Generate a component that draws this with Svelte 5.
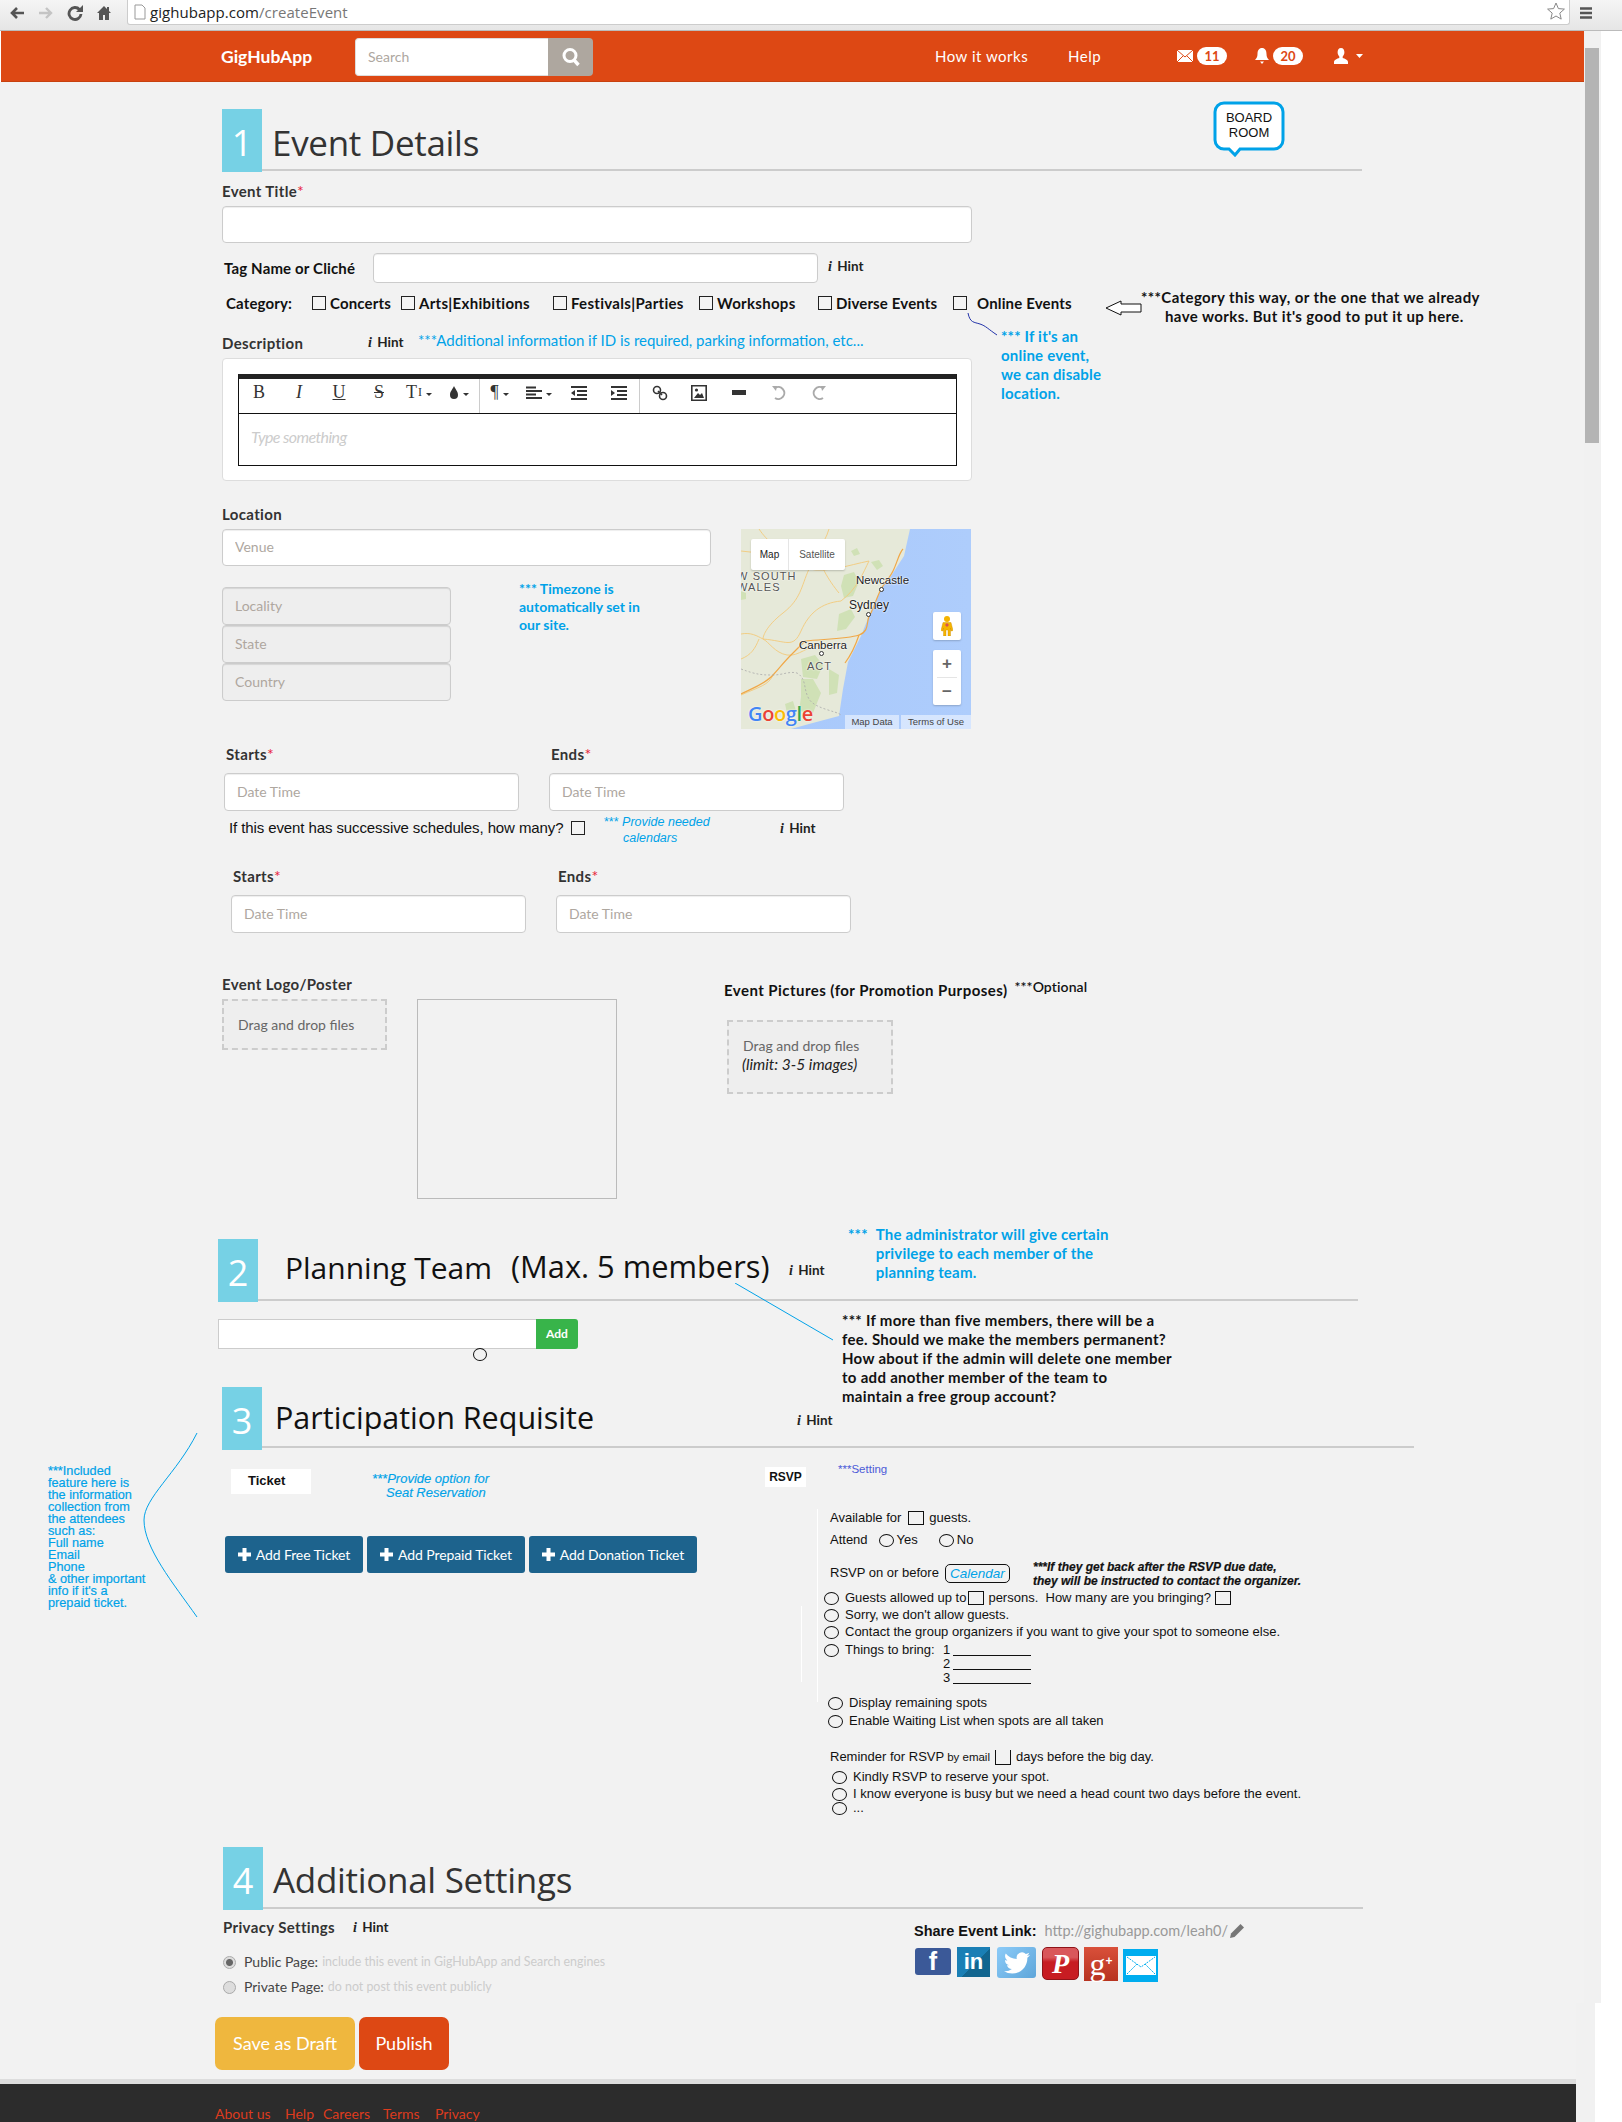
<script>
</script>

{#snippet hint()}
  <span class="hint"><i>i</i> Hint</span>
{/snippet}

<div class="root">
  <header class="browser">
    <svg class="bicon" width="16" height="16" viewBox="0 0 16 16"><path d="M15 8H4M8 3 3 8l5 5" fill="none" stroke="#555" stroke-width="2.6"/></svg>
    <svg class="bicon" width="16" height="16" viewBox="0 0 16 16"><path d="M1 8h11M8 3l5 5-5 5" fill="none" stroke="#c4c4c4" stroke-width="2.400"/></svg>
    <svg class="bicon" width="16" height="16" viewBox="0 0 16 16"><path d="M12.500 4.500A6 6 0 1 0 14 9" fill="none" stroke="#555" stroke-width="2.800"/><path d="M9 7h7V0z" fill="#555"/></svg>
    <svg class="bicon" width="16" height="16" viewBox="0 0 16 16"><path d="M8 1 1 8h2v7h4v-5h2v5h4V8h2l-2-2V2h-2v2z" fill="#555"/></svg>
    <div class="url">
      <svg width="12" height="16" viewBox="0 0 12 16"><path d="M1 1h7l3 3v11H1z" fill="#fff" stroke="#999"/></svg>
      <span class="u1">gighubapp.com</span><span class="u2">/createEvent</span>
      <svg class="star" width="18" height="18" viewBox="0 0 18 18"><path d="m9 1 2.400 5.600 6 .5-4.600 4 1.400 6L9 14l-5.200 3.100 1.400-6-4.600-4 6-.5z" fill="#fff" stroke="#888"/></svg>
    </div>
    <svg class="burger" width="14" height="14" viewBox="0 0 14 14"><path d="M1 2.500h12M1 7h12M1 11.500h12" stroke="#555" stroke-width="2.400"/></svg>
  </header>

  <nav class="nav">
    <span></span>
    <span class="logo">GigHubApp</span>
    <div class="search">
      <input placeholder="Search" />
      <button aria-label="search"><svg width="20" height="20" viewBox="0 0 20 20"><circle cx="9" cy="8.500" r="6" fill="none" stroke="#fff" stroke-width="3"/><path d="m13 13 4.500 5" stroke="#fff" stroke-width="3.400"/></svg></button>
    </div>
    <span></span>
    <span class="nlink">How it works</span>
    <span class="nlink">Help</span>
    <span class="ni">
      <svg width="16" height="12" viewBox="0 0 16 12"><path d="M0 0h16v12H0z" fill="#fff"/><path d="m0 0 8 7 8-7M0 12l6-6M16 12l-6-6" stroke="#dd4814" fill="none"/></svg>
      <b class="badge">11</b>
    </span>
    <span class="ni">
      <svg width="14" height="16" viewBox="0 0 14 16"><path d="M7 0c3 0 4.500 2.500 4.500 6 0 3 1 4.500 2.500 6H0c1.500-1.500 2.500-3 2.500-6C2.500 2.500 4 0 7 0zM5 13.500h4L7 16z" fill="#fff"/></svg>
      <b class="badge">20</b>
    </span>
    <span class="ni user">
      <svg width="16" height="16" viewBox="0 0 16 16"><path d="M8 0c2.400 0 3.400 2 3.400 4.300 0 2-1 3.400-1.700 4.300v1.400c2 .8 5.300 1.600 5.300 4V16H1v-2c0-2.400 3.300-3.200 5.300-4V8.600C5.600 7.700 4.600 6.300 4.600 4.300 4.600 2 5.600 0 8 0z" fill="#fff"/></svg>
      <svg width="7" height="4" viewBox="0 0 7 4"><path d="M0 0h7L3.500 4z" fill="#fff"/></svg>
    </span>
  </nav>

  <main class="page">
    <section class="s1">
      <div class="head">
        <div class="num">1</div>
        <h2 class="title t1">Event Details</h2>
      </div>

      <div class="bubble">
        <svg width="72" height="56" viewBox="0 0 72 56"><path d="M11 2h50a9 9 0 0 1 9 9v28a9 9 0 0 1-9 9H27l-5 6-6-6h-5a9 9 0 0 1-9-9V11a9 9 0 0 1 9-9z" fill="#fff" stroke="#00a2e8" stroke-width="3"/></svg>
        <span>BOARD<br />ROOM</span>
      </div>
      <svg class="arrow" width="37" height="16" viewBox="0 0 37 16"><path d="M36 4H16V1L1 8l15 7v-3h20z" fill="#fff" stroke="#111"/></svg>
      <div class="catnote"><div>***Category this way, or the one that we already</div><div class="ind">have works. But it's good to put it up here.</div></div>
      <svg class="ccurve" width="32" height="24" viewBox="0 0 32 24"><path d="M1 1c2 10 6 9 12 11s8 5 17 11" fill="none" stroke="#2233aa"/></svg>
      <div class="onote">*** If it's an<br />online event,<br />we can disable<br />location.</div>

      <label class="lb l-title">Event Title<em>*</em></label>
      <input class="inp title-in" />

      <div class="tagrow">
        <span class="cb tagl">Tag Name or Cliché</span>
        <input class="inp tag-in" />
        {@render hint()}
      </div>

      <div class="cats">
        <span class="cb">Category:</span>
        <span class="cat"><s class="box"></s><span class="cb">Concerts</span></span>
        <span class="cat"><s class="box"></s><span class="cb wide">Arts|Exhibitions</span></span>
        <span class="cat"><s class="box"></s><span class="cb wide">Festivals|Parties</span></span>
        <span class="cat"><s class="box"></s><span class="cb wide">Workshops</span></span>
        <span class="cat"><s class="box"></s><span class="cb">Diverse Events</span></span>
        <span class="cat online"><s class="box"></s><span class="cb">Online Events</span></span>
      </div>

      <div class="descrow">
        <label class="lb">Description</label>
        {@render hint()}
        <span class="addl">***Additional information if ID is required, parking information, etc...</span>
      </div>

      <div class="panel">
        <div class="editor">
          <div class="tools">
            <span class="tool tb">B</span>
            <span class="tool ti">I</span>
            <span class="tool tu">U</span>
            <span class="tool ts">S</span>
            <span class="tool tt">T<small>I</small><u></u></span>
            <span class="tool"><svg width="10" height="14" viewBox="0 0 10 14"><path d="M5 0c1 3 4 5 4 9a4 4 0 0 1-8 0c0-4 3-6 4-9z" fill="#333"/></svg><u></u></span>
            <span class="tool sep tp">¶<u></u></span>
            <span class="tool"><svg width="16" height="14" viewBox="0 0 16 14"><path d="M0 1.500h10M0 5h16M0 8.500h10M0 12h16" stroke="#333" stroke-width="2"/></svg><u></u></span>
            <span class="tool"><svg width="16" height="14" viewBox="0 0 16 14"><path d="M0 1h16M6 5h10M6 9h10M0 13h16" stroke="#333" stroke-width="2"/><path d="M4 4v6L0 7z" fill="#333"/></svg></span>
            <span class="tool"><svg width="16" height="14" viewBox="0 0 16 14"><path d="M0 1h16M6 5h10M6 9h10M0 13h16" stroke="#333" stroke-width="2"/><path d="M0 4v6l4-3z" fill="#333"/></svg></span>
            <span class="tool sep"><svg width="16" height="16" viewBox="0 0 16 16"><circle cx="5" cy="5" r="3.500" fill="none" stroke="#333" stroke-width="1.600"/><circle cx="11" cy="11" r="3.500" fill="none" stroke="#333" stroke-width="1.600"/><path d="m6 6 4 4" stroke="#333" stroke-width="1.600"/></svg></span>
            <span class="tool"><svg width="16" height="16" viewBox="0 0 16 16"><path d="M.8.800h14.400v14.400H.8z" fill="#fff" stroke="#333" stroke-width="1.600"/><path d="M3 13l4-5 2 2 2-2 2 5z" fill="#333"/><circle cx="5.500" cy="5" r="1.600" fill="#333"/></svg></span>
            <span class="tool"><svg width="14" height="6" viewBox="0 0 14 6"><path d="M0 0h14v5H0z" fill="#333"/></svg></span>
            <span class="tool"><svg width="14" height="16" viewBox="0 0 14 16"><path d="M3 3a6 6 0 1 1 0 10" fill="none" stroke="#aaa" stroke-width="2"/><path d="M0 1l5 0-1 5z" fill="#aaa"/></svg></span>
            <span class="tool"><svg width="14" height="16" viewBox="0 0 14 16"><path d="M11 3a6 6 0 1 0 0 10" fill="none" stroke="#aaa" stroke-width="2"/><path d="M14 1l-5 0 1 5z" fill="#aaa"/></svg></span>
          </div>
          <div class="edbody">Type something</div>
        </div>
      </div>

      <label class="lb l-loc">Location</label>
      <div class="locgrid">
        <div>
          <input class="inp" placeholder="Venue" />
          <div class="locsub">
            <div class="stack">
              <input class="inp dis" placeholder="Locality" />
              <input class="inp dis" placeholder="State" />
              <input class="inp dis" placeholder="Country" />
            </div>
            <div class="tznote">*** Timezone is<br />automatically set in<br />our site.</div>
          </div>
        </div>
        <div class="map">
          <svg width="230" height="200" viewBox="0 0 230 200">
            <defs><linearGradient id="sea" x1="0" x2="1" y1="0" y2="0"><stop offset="0" stop-color="#8fb6f8"/><stop offset=".25" stop-color="#a9c9fb"/><stop offset="1" stop-color="#aecdfc"/></linearGradient></defs>
            <rect width="230" height="200" fill="url(#sea)"/>
            <path d="M0 0h169l-6 27-13 20-10 13-12 27-8 20-13 26-5 27-4 27-30 8-18 5H0z" fill="#e6e9d9"/>
            <g fill="#d0e1b6">
              <path d="M103 46l10-3 5 10-6 14-9 2-3-12z"/>
              <path d="M98 85l12-5 4 8-9 12-9 2z"/>
              <path d="M60 130l14-4 8 10-6 14-14-2z"/>
              <path d="M60 150l12 0 8 14-8 20-14-2 2-14z"/>
              <path d="M88 140l10 6-2 18-8 2z"/>
              <path d="M130 33l8-2 4 6-6 4z"/>
              <path d="M0 62l5 2 0 6-5 1z"/>
              <path d="M110 22l6-3 3 6-6 2z"/>
              <path d="M44 175l8-3 3 10-9 2z"/>
            </g>
            <g fill="none" stroke="#f3c97a" stroke-width=".9">
              <path d="M0 22c30 2 50 14 68 18s40-4 60-8"/>
              <path d="M18 0c8 12 20 22 50 40"/>
              <path d="M68 40c-8 18-8 30-26 44S22 108 22 110"/>
              <path d="M100 72c-20 2-32 12-40 30s-14 10-38 8"/>
              <path d="M0 105c10-2 16 2 22 5s12 14 24 16 20-10 36-10"/>
              <path d="M0 130c10-4 14-10 18-20"/>
              <path d="M88 0c-2 8-8 16-10 24s10 28 20 40"/>
              <path d="M128 32c-6 12-12 28-28 40"/>
              <path d="M32 146c-4 10-14 12-32 20"/>
            </g>
            <g fill="none" stroke="#f0a848" stroke-width="1.200">
              <path d="M0 165c12-6 24-10 32-19s12-14 18-20 10-10 14-14"/>
              <path d="M64 112c20-2 42-2 54-6s6-16 12-22"/>
              <path d="M130 84c4-10 8-20 10-24s8-10 12-18 6-18 10-22"/>
              <path d="M118 106c-4 12-8 20-14 28"/>
            </g>
            <path d="M0 140c16 6 22 6 32 6s16-4 24-2c10 6 6 16 12 26s28 12 32 16" fill="none" stroke="#aaa" stroke-dasharray="2 2" stroke-width=".8"/>
          </svg>
          <span class="ml ml1">W SOUTH</span>
          <span class="ml ml2">WALES</span>
          <span class="ml ml3">Newcastle</span>
          <span class="ml ml4">Sydney</span>
          <span class="ml ml5">Canberra</span>
          <span class="ml ml6">ACT</span>
          <i class="dot d1"></i><i class="dot d2"></i><i class="dot d3"></i>
          <div class="mapsw"><span class="on">Map</span><span>Satellite</span></div>
          <div class="peg"><svg width="12" height="20" viewBox="0 0 12 20"><circle cx="6" cy="3" r="3" fill="#f5b400"/><path d="M2 6.500h8l2 8-2 .5-.5-3V20H7v-6H5v6H2.500v-8L2 15l-2-.5z" fill="#f5b400" stroke="#c98a00" stroke-width=".4"/><path d="M6 7l2 2-2 2-2-2z" fill="#d9534f"/></svg></div>
          <div class="zoomc"><span>+</span><hr /><span>−</span></div>
          <div class="goog"><span class="g1">G</span><span class="g2">o</span><span class="g3">o</span><span class="g1">g</span><span class="g4">l</span><span class="g2">e</span></div>
          <div class="attr"><span>Map Data</span><span>Terms of Use</span></div>
        </div>
      </div>

      <div class="dates d-a">
        <div><label class="lb">Starts<em>*</em></label><input class="inp" placeholder="Date Time" /></div>
        <div><label class="lb">Ends<em>*</em></label><input class="inp" placeholder="Date Time" /></div>
      </div>

      <div class="succ">
        <span class="qtxt">If this event has successive schedules, how many?</span>
        <s class="box"></s>
        <span class="pnote"><span>*** <i>Provide needed</i></span><i class="cal">calendars</i></span>
        {@render hint()}
      </div>

      <div class="dates d-b">
        <div><label class="lb">Starts<em>*</em></label><input class="inp" placeholder="Date Time" /></div>
        <div><label class="lb">Ends<em>*</em></label><input class="inp" placeholder="Date Time" /></div>
      </div>

      <div class="media">
        <div class="mcol1">
          <label class="lb">Event Logo/Poster</label>
          <div class="drop d1z">Drag and drop files</div>
        </div>
        <div class="poster"></div>
        <div class="mcol3">
          <div class="pichead"><span class="cb pict">Event Pictures (for Promotion Purposes)</span><span class="opt">***Optional</span></div>
          <div class="drop d2z">Drag and drop files<br /><i>(limit: 3-5 images)</i></div>
        </div>
      </div>
    </section>

    <section class="s2">
      <div class="head">
        <div class="num">2</div>
        <h2 class="title t2"><span class="pt">Planning Team</span><span class="mx">(Max. 5 members)</span>{@render hint()}</h2>
      </div>
      <div class="adminnote"><span>***</span><div>The administrator will give certain<br />privilege to each member of the<br />planning team.</div></div>
      <svg class="pline" width="100" height="60" viewBox="0 0 100 60"><path d="M0 0 98 57" stroke="#00a2e8" fill="none"/></svg>
      <div class="feenote">*** If more than five members, there will be a<br />fee. Should we make the members permanent?<br />How about if the admin will delete one member<br />to add another member of the team to<br />maintain a free group account?</div>
      <div class="addrow"><input class="inp" /><button>Add</button></div>
      <i class="blob"></i>
    </section>

    <section class="s3">
      <div class="head">
        <div class="num">3</div>
        <h2 class="title t3"><span class="prq">Participation Requisite</span>{@render hint()}</h2>
      </div>
      <div class="incl">***Included<br />feature here is<br />the information<br />collection from<br />the attendees<br />such as:<br />Full name<br />Email<br />Phone<br />&amp; other important<br />info if it's a<br />prepaid ticket.</div>
      <svg class="icurve" width="56" height="186" viewBox="0 0 56 186"><path d="M54 0C34 40 1 65 1 87c0 28 29 63 53 97" fill="none" stroke="#00a2e8"/></svg>

      <div class="pgrid">
        <div class="pleft">
          <div class="tickrow">
            <span class="tick">Ticket</span>
            <span class="seat">***Provide option for<br /><span class="ind2">Seat Reservation</span></span>
          </div>
          <div class="tbtns">
            <button class="tb1"><svg width="13" height="13" viewBox="0 0 13 13"><path d="M4.500 0h4v4.500H13v4H8.500V13h-4V8.500H0v-4h4.500z" fill="#fff"/></svg>Add Free Ticket</button>
            <button class="tb2"><svg width="13" height="13" viewBox="0 0 13 13"><path d="M4.500 0h4v4.500H13v4H8.500V13h-4V8.500H0v-4h4.500z" fill="#fff"/></svg>Add Prepaid Ticket</button>
            <button class="tb3"><svg width="13" height="13" viewBox="0 0 13 13"><path d="M4.500 0h4v4.500H13v4H8.500V13h-4V8.500H0v-4h4.500z" fill="#fff"/></svg>Add Donation Ticket</button>
          </div>
        </div>
        <div class="pright">
          <i class="wl wl1"></i><i class="wl wl2"></i>
          <div class="rsvphead"><span class="rsvp">RSVP</span><span class="setting"><b>***</b>Setting</span></div>
          <div class="form">
            <div class="rl a1">Available for <s class="bx"></s> guests.</div>
            <div class="rl a2 m8">Attend <s class="rd r1"></s>Yes <s class="rd r2"></s>No</div>
            <div class="rl a3 m19">RSVP on or before <span class="calb">Calendar</span><span class="due">***If they get back after the RSVP due date,<br />they will be instructed to contact the organizer.</span></div>

            <div class="rl o m11"><s class="rd"></s>Guests allowed up to<s class="bx b1"></s>persons.&nbsp; How many are you bringing?<s class="bx b2"></s></div>
            <div class="rl o m3"><s class="rd"></s>Sorry, we don't allow guests.</div>
            <div class="rl o m3"><s class="rd"></s>Contact the group organizers if you want to give your spot to someone else.</div>
            <div class="rl o m4"><s class="rd"></s><span class="thw">Things to bring:</span><span class="n">1</span><s class="ul"></s></div>
            <div class="rl o"><span class="nb"><span class="n">2</span><s class="ul"></s></span></div>
            <div class="rl o"><span class="nb"><span class="n">3</span><s class="ul"></s></span></div>

            <div class="rl o2 m11"><s class="rd"></s>Display remaining spots</div>
            <div class="rl o2 m4"><s class="rd"></s>Enable Waiting List when spots are all taken</div>

            <div class="rl rem m22">Reminder for RSVP <small>by email</small> <s class="cup"></s> days before the big day.</div>
            <div class="rl o3 m6"><s class="rd"></s>Kindly RSVP to reserve your spot.</div>
            <div class="rl o3 m3"><s class="rd"></s>I know everyone is busy but we need a head count two days before the event.</div>
            <div class="rl o3"><s class="rd"></s>...</div>
          </div>
        </div>
      </div>
    </section>

    <section class="s4">
      <div class="head">
        <div class="num">4</div>
        <h2 class="title t4">Additional Settings</h2>
      </div>
      <div class="s4grid">
        <div class="priv">
          <div class="privhead"><label class="lb">Privacy Settings</label>{@render hint()}</div>
          <div class="prow p1"><s class="pr on"></s>Public Page: <span>include this event in GigHubApp and Search engines</span></div>
          <div class="prow p2"><s class="pr"></s>Private Page: <span>do not post this event publicly</span></div>
        </div>
        <div class="share">
          <div class="shead"><span class="sl">Share Event Link:</span><span class="surl">http://gighubapp.com/leah0/</span>
            <svg width="14" height="14" viewBox="0 0 14 14"><path d="M10.500 0 14 3.500 4.500 13 0 14l1-4.500z" fill="#777"/></svg>
          </div>
          <div class="socs">
            <span class="soc fb">f</span>
            <span class="soc li">in</span>
            <span class="soc tw"><svg width="30" height="26" viewBox="0 0 24 24"><path d="M23.953 4.570a10 10 0 01-2.825.775 4.958 4.958 0 002.163-2.723c-.951.555-2.005.959-3.127 1.184a4.920 4.920 0 00-8.384 4.482C7.690 8.095 4.067 6.130 1.640 3.162a4.822 4.822 0 00-.666 2.475c0 1.710.870 3.213 2.188 4.096a4.904 4.904 0 01-2.228-.616v.060a4.923 4.923 0 003.946 4.827 4.996 4.996 0 01-2.212.085 4.936 4.936 0 004.604 3.417 9.867 9.867 0 01-6.102 2.105c-.390 0-.779-.023-1.170-.067a13.995 13.995 0 007.557 2.209c9.053 0 13.998-7.496 13.998-13.985 0-.210 0-.420-.015-.630A9.935 9.935 0 0024 4.590z" fill="#fff"/></svg></span>
            <span class="soc pi">P</span>
            <span class="soc gp">g<small>+</small></span>
            <span class="soc ma"><svg width="30" height="19" viewBox="0 0 30 19"><path d="M0 0h30v19H0z" fill="#fff"/><path d="m1 1 14 10L29 1M1 18l10-10M29 18 19 8" stroke="#00adef" fill="none" stroke-dasharray="2 1"/></svg></span>
          </div>
        </div>
      </div>
      <div class="actions"><button class="draft">Save as Draft</button><button class="pub">Publish</button></div>
    </section>
  </main>

  <footer class="foot">
    <a href="#a">About us</a><a href="#h">Help</a><a href="#c">Careers</a><a href="#t">Terms</a><a href="#p">Privacy</a>
  </footer>

  <div class="scroll"><i class="sup"></i><i class="thumb"></i></div>
  <div class="edge"></div>
</div>

<style>
  :global(body) { margin: 0; background: #fff; }
  .root { position: relative; width: 1622px; height: 2122px; overflow: hidden; background: #fff; font-family: Lato, "Open Sans", sans-serif; color: #333; font-size: 14px; }
  input, button { font-family: inherit; box-sizing: border-box; }
  input::placeholder { color: #aea79f; opacity: 1; }
  s { text-decoration: none; display: inline-block; }
  em { color: #e8243c; font-style: normal; font-weight: 400; }

  .browser { height: 31px; background: linear-gradient(#f5f5f5, #e6e6e6); border-bottom: 1px solid #bbb; box-sizing: border-box; display: flex; align-items: center; padding: 0 0 5px 9px; gap: 13px; }
  .bicon { flex: none; }
  .url { flex: none; width: 1443px; height: 26px; margin-left: 2px; margin-top: -1px; background: #fff; border: 1px solid #ccc; border-top: 0; border-radius: 0 0 3px 3px; box-sizing: border-box; display: flex; align-items: center; padding-left: 6px; font: 15px "Open Sans", sans-serif; position: relative; letter-spacing: .05px; }
  .url svg:first-child { margin-right: 4px; }
  .u1 { color: #222; } .u2 { color: #777; }
  .star { position: absolute; right: 4px; top: 3px; }
  .burger { margin-left: -4px; }

  .nav { height: 51px; width: 1583px; margin-left: 1px; background: #dd4814; display: grid; grid-template-columns: 220px 134px 238px 342px 133px 109px 78px 78px 60px; align-items: center; color: #fff; box-sizing: border-box; border-bottom: 1px solid #c8410f; }
  .logo { font-size: 17.500px; font-weight: 700; color: #fff; }
  .search { display: flex; height: 38px; margin-top: 1px; }
  .search input { width: 193px; height: 38px; border: 1px solid #ddd; border-right: 0; border-radius: 4px 0 0 4px; padding: 0 12px; font-size: 14px; background: #fff; }
  .search button { width: 45px; height: 38px; border: 0; background: #aea79f; border-radius: 0 4px 4px 0; padding: 0; display: flex; align-items: center; justify-content: center; }
  .nlink { font-size: 15px; letter-spacing: .5px; }
  .ni { display: flex; align-items: center; gap: 4px; }
  .badge { background: #fff; color: #dd4814; font-size: 13px; width: 30px; height: 18px; line-height: 18px; text-align: center; border-radius: 9px; font-weight: 700; }
  .user { gap: 7px; }

  .page { width: 1584px; height: 1997px; background: #f2f2f2; padding-top: 27px; box-sizing: border-box; }

  .head { display: flex; height: 63px; align-items: flex-start; }
  .num { flex: none; width: 40px; height: 63px; background: #76d1e5; color: #fff; font: 36px/67px "Open Sans", sans-serif; text-align: center; }
  .title { margin: 0; height: 61px; border-bottom: 2px solid #ccc; box-sizing: content-box; flex: 1; font-weight: 400; font-family: "Open Sans", sans-serif; color: #333; display: flex; align-items: flex-end; }
  .t1, .t4 { font-size: 35px; padding-left: 10px; height: 60px; letter-spacing: -.3px; }
  .t1 { line-height: 53px; }
  .t4 { line-height: 54px; }
  .lb { display: block; font: 700 15px/20px Lato, sans-serif; color: #333; letter-spacing: .35px; }
  .lb em { font-size: 16px; }
  .cb { font: 700 15px/20px Lato, sans-serif; color: #111; white-space: nowrap; letter-spacing: .15px; }
  .wide { letter-spacing: .3px; }
  .pict { letter-spacing: .45px; }
  .inp { display: block; width: 100%; height: 38px; background: #fff; border: 1px solid #ccc; border-radius: 4px; padding: 0 12px 2px; font-size: 14px; box-shadow: inset 0 1px 1px rgba(0,0,0,.07); }
  .hint { font: 700 13.500px/16px Lato, sans-serif; color: #222; white-space: nowrap; }
  .hint i { font-family: "Liberation Serif", serif; font-size: 14px; margin-right: 2px; }
  .box { width: 12px; height: 12px; border: 1px solid #222; background: #f4f4f4; flex: none; }

  .s1 { position: relative; margin-left: 222px; width: 1140px; }
  .bubble { position: absolute; left: 991px; top: -8px; width: 72px; height: 56px; }
  .bubble svg { position: absolute; inset: 0; }
  .bubble span { position: absolute; left: 0; right: 0; top: 9px; text-align: center; font: 13px/15px "Liberation Sans", sans-serif; color: #111; }
  .arrow { position: absolute; left: 883px; top: 191px; }
  .catnote { position: absolute; left: 919px; top: 179px; font: 700 15px/19px Lato, sans-serif; color: #111; white-space: nowrap; letter-spacing: .4px; }
  .ind { padding-left: 24px; }
  .ccurve { position: absolute; left: 745px; top: 203px; }
  .onote { position: absolute; left: 779px; top: 218px; font: 700 15px/19px Lato, sans-serif; color: #00a2e8; white-space: nowrap; letter-spacing: .2px; }

  .l-title { margin-top: 9px; }
  .title-in { width: 750px; height: 37px; margin-top: 5px; }
  .tagrow { display: grid; grid-template-columns: 151px 455px auto; margin-top: 10px; align-items: center; }
  .tagl { padding-left: 2px; }
  .tag-in { width: 445px; height: 30px; }
  .tagrow .hint { margin-top: -4px; }
  .cats { display: grid; grid-template-columns: 86px 89px 152px 146px 119px 135px 144px; grid-template-rows: 14px; padding-left: 4px; margin-top: 13px; height: 14px; align-items: center; }
  .cat { display: flex; align-items: center; gap: 4px; }
  .online { gap: 10px; }
  .descrow { display: grid; grid-template-columns: 146px 50px auto; margin-top: 23px; height: 20px; align-items: start; }
  .descrow .hint { margin-top: 1px; }
  .addl { font: 15px/15px Lato, sans-serif; color: #00a2e8; white-space: nowrap; }
  .panel { width: 750px; height: 123px; margin-top: 5px; box-sizing: border-box; background: #fff; border: 1px solid #ddd; border-radius: 4px; padding: 15px 14px 0 15px; }
  .editor { border: 1px solid #111; border-top: 5px solid #222; height: 92px; box-sizing: border-box; }
  .tools { display: flex; height: 35px; border-bottom: 1px solid #111; padding-top: 0; box-sizing: border-box; }
  .tool { width: 40px; flex: none; display: flex; align-items: center; justify-content: center; gap: 4px; box-sizing: border-box; color: #333; font: 18px "Liberation Serif", serif; position: relative; padding-bottom: 7px; }
  .tool.sep { border-left: 1px solid #ccc; padding-left: 0; }
  .tool u { width: 0; height: 0; border: 3px solid transparent; border-top: 3px solid #333; border-bottom: 0; text-decoration: none; margin-top: 3px; }
  .ti { font-style: italic; }
  .tu { text-decoration: underline; }
  .ts { text-decoration: line-through; }
  .tt small { font-size: 12px; margin-left: -3px; }
  .edbody { padding: 13px 10px 0 12px; font: italic 16px/20px Lato, sans-serif; color: #ccc; letter-spacing: -.6px; }

  .l-loc { margin-top: 23px; }
  .locgrid { display: grid; grid-template-columns: 489px 230px; column-gap: 30px; margin-top: 5px; }
  .locgrid .inp { height: 37px; }
  .locsub { display: flex; margin-top: 21px; }
  .stack { width: 229px; }
  .stack .inp { height: 38px; }
  .dis { background: #eee; border-color: #ccc; box-shadow: inset 0 1px 1px rgba(0,0,0,.1); }
  .tznote { margin: -7px 0 0 68px; font: 700 14px/18px Lato, sans-serif; color: #00a2e8; white-space: nowrap; }
  .map { position: relative; width: 230px; height: 200px; overflow: hidden; }
  .map > svg { display: block; }
  .ml { position: absolute; font: 11px/12px "Liberation Sans", sans-serif; color: #222; white-space: nowrap; text-shadow: 0 0 2px #fff, 0 0 2px #fff; }
  .ml1 { left: -4px; top: 41px; letter-spacing: 1.100px; color: #555; }
  .ml2 { left: -4px; top: 52px; letter-spacing: 1.100px; color: #555; }
  .ml3 { left: 115px; top: 45px; font-size: 11.500px; }
  .ml4 { left: 108px; top: 70px; font-size: 12px; }
  .ml5 { left: 58px; top: 110px; font-size: 11.500px; }
  .ml6 { left: 66px; top: 131px; letter-spacing: 1px; color: #555; }
  .dot { position: absolute; width: 3px; height: 3px; border: 1px solid #333; border-radius: 50%; background: #fff; }
  .d1 { left: 138px; top: 58px; } .d2 { left: 125px; top: 83px; } .d3 { left: 78px; top: 122px; }
  .mapsw { position: absolute; left: 10px; top: 10px; width: 94px; height: 31px; background: #fff; border-radius: 2px; display: grid; grid-template-columns: 38px 56px; font: 10px/31px "Liberation Sans", sans-serif; text-align: center; color: #555; box-shadow: 0 1px 2px rgba(0,0,0,.2); }
  .mapsw .on { color: #222; border-right: 1px solid #e5e5e5; }
  .peg { position: absolute; left: 192px; top: 83px; width: 28px; height: 28px; background: #fff; border-radius: 2px; display: flex; align-items: center; justify-content: center; box-shadow: 0 1px 2px rgba(0,0,0,.2); }
  .zoomc { position: absolute; left: 192px; top: 121px; width: 28px; height: 55px; background: #fff; border-radius: 2px; text-align: center; font: 700 17px/27px "Liberation Sans", sans-serif; color: #666; box-shadow: 0 1px 2px rgba(0,0,0,.2); }
  .zoomc span { display: block; height: 27px; }
  .zoomc hr { margin: 0 4px; border: 0; border-top: 1px solid #e5e5e5; }
  .goog { position: absolute; left: 7px; top: 173px; font: 600 20px/24px "Open Sans", sans-serif; letter-spacing: -.4px; text-shadow: 0 0 2px #fff; }
  .g1 { color: #4285f4; } .g2 { color: #ea4335; } .g3 { color: #fbbc05; } .g4 { color: #34a853; }
  .attr { position: absolute; left: 104px; right: 0; bottom: 0; height: 14px; display: grid; grid-template-columns: 54px 70px; gap: 2px; font: 9.500px/14px "Liberation Sans", sans-serif; color: #444; white-space: nowrap; text-align: center; }
  .attr span { background: rgba(255,255,255,.5); }

  .dates { display: grid; column-gap: 30px; }
  .dates .lb { padding-left: 2px; margin-bottom: 9px; }
  .d-a { grid-template-columns: 295px 295px; margin: 15px 0 0 2px; }
  .d-b { grid-template-columns: 295px 295px; margin: 28px 0 0 9px; }
  .succ { display: grid; grid-template-columns: 342px 33px 176px auto; margin: 7px 0 0 7px; height: 20px; align-items: start; }
  .qtxt { font: 15px/20px "Liberation Sans", sans-serif; color: #111; letter-spacing: -.1px; white-space: nowrap; }
  .succ .box { margin-top: 3px; }
  .pnote { display: flex; flex-direction: column; font: 12.500px/16px "Liberation Sans", sans-serif; color: #00a2e8; margin-top: -4px; white-space: nowrap; }
  .cal { padding-left: 19px; }
  .succ .hint { margin-top: 2px; }

  .media { display: flex; margin-top: 41px; }
  .mcol1 { width: 195px; flex: none; }
  .drop { border: 2px dashed #ccc; background: #eee; box-sizing: border-box; color: #666; font: 14px/19px Lato, sans-serif; }
  .d1z { width: 165px; height: 51px; margin-top: 5px; padding: 14px 14px; white-space: nowrap; }
  .poster { width: 200px; height: 200px; margin-top: 25px; border: 1px solid #bbb; box-sizing: border-box; flex: none; }
  .mcol3 { margin-left: 107px; padding-top: 6px; }
  .pichead { display: flex; gap: 7px; align-items: flex-start; }
  .opt { font: 600 14px/14px Lato, sans-serif; color: #111; letter-spacing: .1px; }
  .d2z { width: 166px; height: 74px; margin: 20px 0 0 3px; padding: 14px 14px; white-space: nowrap; }
  .d2z i { color: #222; font-size: 15.500px; margin-left: -1px; }

  .s2 { position: relative; margin: 40px 0 0 218px; width: 1140px; }
  .t2 { padding-left: 27px; color: #111; align-items: center; height: 60px; }
  .pt { width: 226px; font-size: 30px; flex: none; white-space: nowrap; margin-top: -3px; }
  .mx { width: 278px; font-size: 30.800px; flex: none; white-space: nowrap; margin-top: -6px; }
  .t2 .hint { margin-top: 3px; }
  .adminnote { position: absolute; left: 630px; top: -14px; display: flex; gap: 8px; font: 700 15px/19px Lato, sans-serif; color: #00a2e8; white-space: nowrap; letter-spacing: .2px; }
  .pline { position: absolute; left: 517px; top: 44px; }
  .feenote { position: absolute; left: 624px; top: 72px; font: 700 15px/19px Lato, sans-serif; color: #111; white-space: nowrap; letter-spacing: .3px; }
  .addrow { display: flex; margin-top: 17px; height: 30px; }
  .addrow .inp { width: 318px; height: 30px; border-radius: 0; border: 1px solid #ccc; border-right: 0; box-shadow: none; }
  .addrow button { width: 42px; height: 30px; background: #38b44a; color: #fff; font: 700 12px/30px Lato, sans-serif; border: 0; border-radius: 0 3px 3px 0; padding: 0; }
  .blob { position: absolute; left: 255px; top: 109px; width: 12px; height: 11px; border: 1px solid #111; border-radius: 50%; background: #f2f2f2; }

  .s3 { position: relative; margin: 38px 0 0 222px; width: 1192px; }
  .t3 { height: 59px; padding-left: 13px; color: #111; align-items: center; font-size: 30.500px; }
  .prq { width: 522px; flex: none; white-space: nowrap; margin-top: 1px; }
  .t3 .hint { margin-top: 8px; }
  .incl { position: absolute; left: -174px; top: 78px; font: 12.700px/12px "Liberation Sans", sans-serif; color: #00a2e8; white-space: nowrap; -webkit-text-stroke: .2px #00a2e8; }
  .icurve { position: absolute; left: -79px; top: 46px; }
  .pgrid { display: flex; }
  .pleft { width: 543px; flex: none; }
  .tickrow { display: flex; height: 25px; margin: 19px 0 0 9px; }
  .tick { width: 80px; height: 25px; background: #fff; font: 700 13px/23px "Liberation Sans", sans-serif; color: #111; padding-left: 17px; box-sizing: border-box; }
  .seat { margin-left: 61px; padding-top: 3px; font: italic 13px/14px "Liberation Sans", sans-serif; color: #00a2e8; white-space: nowrap; -webkit-text-stroke: .15px #00a2e8; }
  .ind2 { padding-left: 14px; }
  .tbtns { display: flex; gap: 4px; margin: 42px 0 0 3px; }
  .tbtns button { height: 37px; background: #1d638d; color: #fff; border: 0; border-radius: 3px; font: 14px/37px Lato, sans-serif; padding: 0; display: flex; align-items: center; justify-content: center; gap: 5px; white-space: nowrap; letter-spacing: -.1px; }
  .tb1 { width: 138px; } .tb2 { width: 158px; } .tb3 { width: 168px; }

  .pright { margin-top: 17px; font: 13px/14px "Liberation Sans", sans-serif; color: #111; position: relative; flex: 1; white-space: nowrap; }
  .wl { position: absolute; width: 1px; background: #fff; }
  .wl1 { left: 52px; top: 42px; height: 193px; }
  .wl2 { left: 36px; top: 139px; height: 76px; }
  .rsvphead { display: flex; height: 20px; }
  .rsvp { width: 41px; height: 20px; background: #fff; font: 700 12px/20px "Liberation Sans", sans-serif; text-align: center; color: #111; }
  .setting { margin-left: 32px; font: 11.500px/14px "Liberation Sans", sans-serif; color: #4d5bd8; margin-top: -5px; }
  .setting b { font-weight: 400; }
  .form { margin-top: 24px; margin-left: 65px; }
  .rl { height: 14px; display: flex; align-items: center; position: relative; }
  .m3 { margin-top: 3px; } .m4 { margin-top: 4px; } .m6 { margin-top: 6px; } .m8 { margin-top: 8px; } .m11 { margin-top: 11px; } .m19 { margin-top: 19px; } .m22 { margin-top: 22px; }
  .bx { width: 14px; height: 12px; border: 1px solid #111; flex: none; }
  .a1 .bx { margin: 0 5px 0 7px; }
  .rd { width: 13px; height: 11px; border: 1px solid #111; border-radius: 50%; flex: none; margin-right: 6px; box-sizing: content-box; }
  .r1 { margin-left: 11px; margin-right: 3px; }
  .r2 { margin-left: 21px; margin-right: 3px; }
  .calb { margin-left: 6px; width: 65px; height: 19px; box-sizing: border-box; border: 1px solid #111; border-radius: 5px; font: italic 13.500px/17px "Liberation Sans", sans-serif; color: #00a2e8; text-align: center; }
  .due { position: absolute; left: 203px; top: -6px; font: italic 600 12px/14px "Liberation Sans", sans-serif; -webkit-text-stroke: .2px #111; }
  .o { margin-left: -6px; }
  .o .b1 { margin: 0 4px 0 2px; }
  .o .b2 { margin-left: 4px; }
  .thw { width: 98px; }
  .n { width: 10px; }
  .ul { width: 78px; height: 1px; background: #111; margin-top: 11px; }
  .nb { display: flex; align-items: center; margin-left: 119px; }
  .o2 { margin-left: -2px; }
  .rem small { font-size: 11.500px; margin: 0 2px 0 3px; }
  .cup { width: 14px; height: 14px; border: 1px solid #111; border-top: 0; margin: 0 5px 0 3px; }
  .o3 { margin-left: 2px; }

  .s4 { margin: 32px 0 0 223px; width: 1140px; }
  .s4grid { display: flex; height: 107px; }
  .priv { width: 691px; flex: none; padding-top: 7px; }
  .privhead { display: flex; gap: 18px; align-items: center; height: 20px; }
  .prow { display: flex; align-items: center; font: 14px/20px Lato, sans-serif; color: #444; white-space: nowrap; }
  .prow span { font-size: 12.400px; color: #ccc; margin-left: 4px; }
  .p1 { margin-top: 15px; } .p2 { margin-top: 5px; }
  .pr { width: 11px; height: 11px; border-radius: 50%; border: 1px solid #aaa; background: #ddd; margin-right: 8px; flex: none; }
  .pr.on { background: radial-gradient(circle, #666 0 3px, #ddd 4px); }
  .share { padding-top: 11px; }
  .shead { display: flex; align-items: center; height: 20px; gap: 8px; }
  .sl { font: 700 14.500px/20px "Liberation Sans", sans-serif; color: #111; white-space: nowrap; }
  .surl { font: 14.500px/20px Lato, sans-serif; color: #999; margin-right: -6px; white-space: nowrap; }
  .socs { display: flex; margin: 6px 0 0 1px; align-items: flex-start; }
  .soc { display: flex; align-items: center; justify-content: center; color: #fff; flex: none; }
  .fb { width: 36px; height: 27px; margin-top: 1px; background: #3b5998; border-radius: 3px; font: 700 25px/27px "Liberation Sans", sans-serif; }
  .li { width: 33px; height: 30px; margin-left: 6px; background: linear-gradient(135deg, #1a7fb5 55%, #12658f 55%); font: 700 22px/30px "Liberation Sans", sans-serif; }
  .tw { width: 39px; height: 31px; margin-left: 7px; background: linear-gradient(135deg, #8ccbf8, #5ea6da); border-radius: 3px; }
  .pi { width: 37px; height: 33px; margin-left: 6px; background: linear-gradient(#d9575b 30%, #c71c22 45%); border-radius: 5px; font: italic 700 28px/33px "Liberation Serif", serif; border: 1px solid #8f1318; box-sizing: border-box; }
  .gp { width: 34px; height: 34px; margin-left: 5px; background: linear-gradient(#d9503a, #b73320); font: 32px/28px "Liberation Serif", serif; }
  .gp small { font: 700 12px/12px "Liberation Sans", sans-serif; margin-top: -6px; }
  .ma { width: 35px; height: 33px; margin: 2px 0 0 5px; background: #00adef; }
  .actions { display: flex; gap: 4px; margin: 0 0 0 -8px; }
  .draft, .pub { height: 53px; border: 0; border-radius: 7px; color: #fff; font: 18px/53px Lato, sans-serif; padding: 0; }
  .draft { width: 140px; background: #efb73e; }
  .pub { width: 90px; background: #dd4814; }

  .foot { position: absolute; left: 0; top: 2079px; width: 1576px; height: 43px; box-sizing: border-box; background: #2c2c2c; border-top: 5px solid #ddd; display: grid; grid-template-columns: 70px 38px 60px 52px auto; padding: 21px 0 0 215px; font: 14px/18px Lato, sans-serif; }
  .foot a { color: #dd3b1e; text-decoration: none; }

  .scroll { position: absolute; left: 1584px; top: 31px; width: 17px; height: 1972px; background: #f1f1f1; }
  .sup { display: block; height: 17px; }
  .thumb { display: block; width: 14px; height: 395px; margin-left: 1px; background: #b4b4b4; }
  .edge { position: absolute; left: 1576px; top: 2003px; width: 19px; height: 119px; background: #f1f1f1; }
</style>
